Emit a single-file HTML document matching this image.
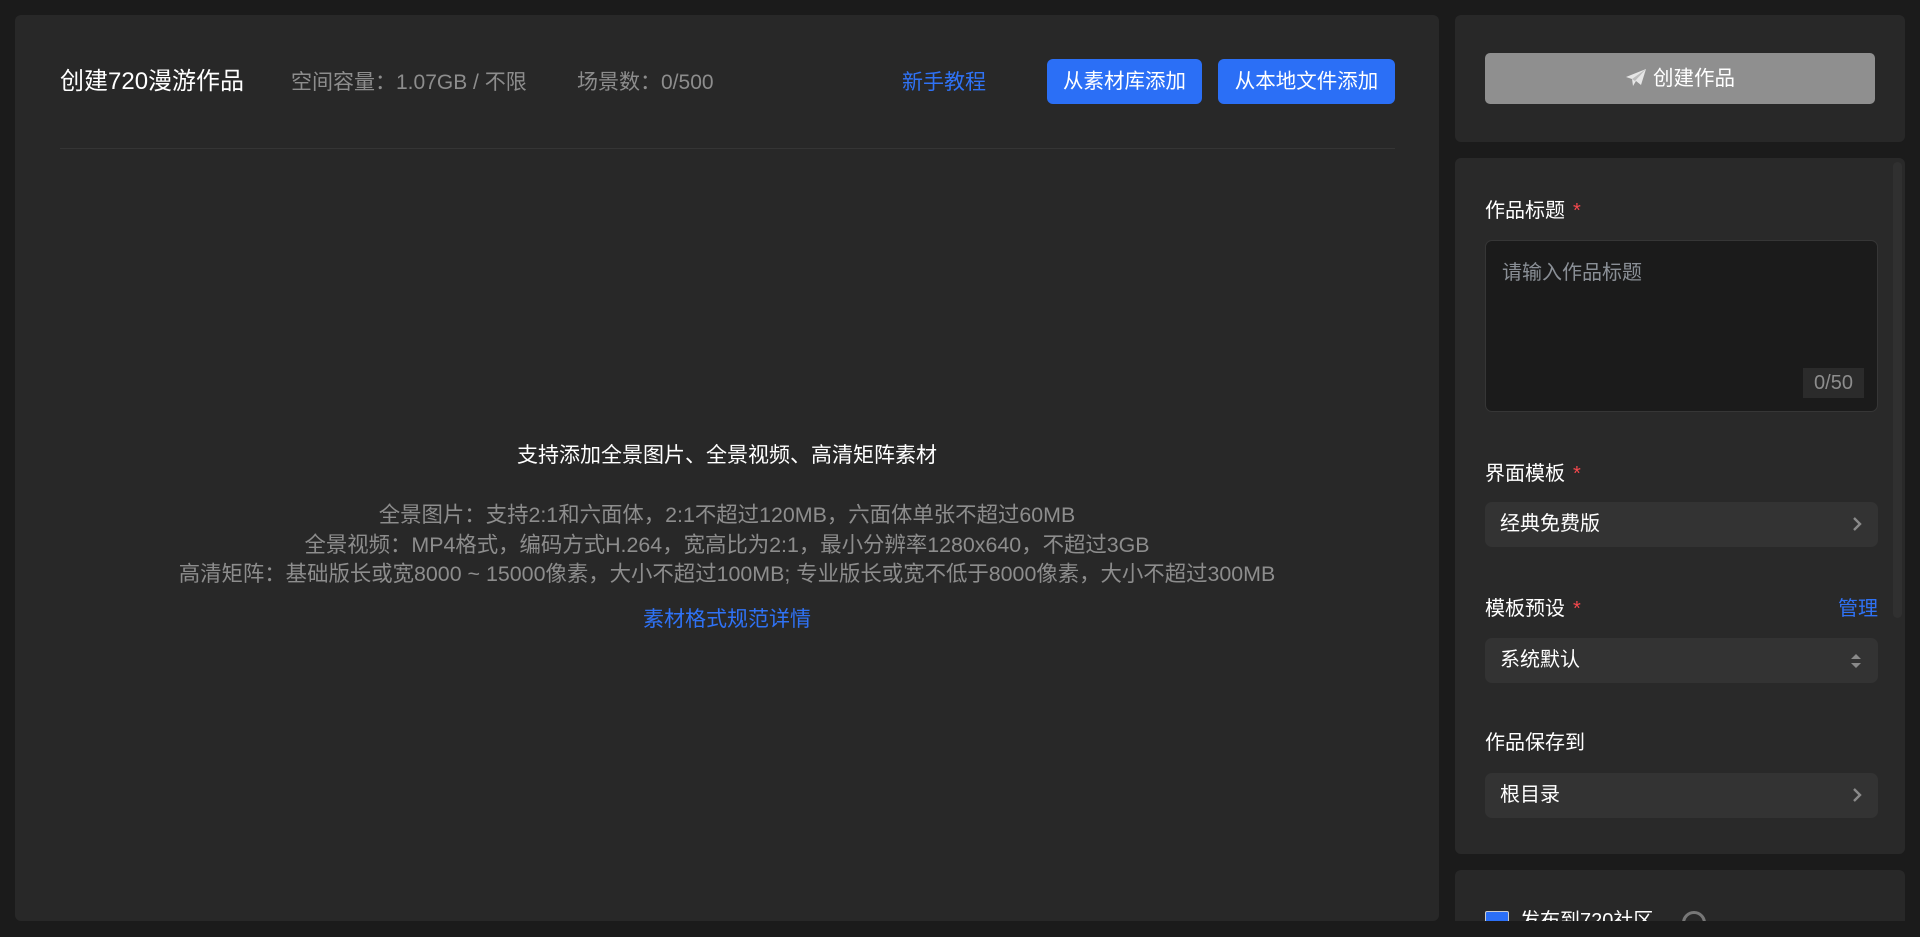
<!DOCTYPE html>
<html><head><meta charset="utf-8"><style>
*{box-sizing:border-box;margin:0;padding:0}
body{width:1920px;height:937px;background:#1b1b1b;font-family:"Liberation Sans","Noto Sans CJK SC",sans-serif;color:#fff;position:relative;overflow:hidden;font-size:20px}
.abs{position:absolute;white-space:nowrap}
.main{position:absolute;left:15px;top:15px;width:1424px;height:906px;background:#282828;border-radius:6px}
.btn{position:absolute;top:59px;height:45px;background:#2b6ff6;border-radius:6px;color:#fff;font-size:20.5px;line-height:45px;text-align:center}
.gray{color:#8d8d8d}
.blue{color:#2f72f5}
.lbl{position:absolute;left:1485px;font-size:20px;line-height:24px;color:#fff}
.lbl i{color:#f5484d;font-style:normal;margin-left:8px}
.sel{position:absolute;left:1485px;width:393px;height:45px;background:#333;border-radius:7px;padding-left:15px;line-height:45px;font-size:20px}
.chev{position:absolute;right:16px;top:14px;width:10px;height:16px}
</style></head><body>
<div class="main"></div>
<div class="abs" style="left:60px;top:67px;font-size:24px;line-height:30px">创建720漫游作品</div>
<div class="abs gray" style="left:291px;top:69px;font-size:21px;line-height:28px">空间容量：1.07GB / 不限</div>
<div class="abs gray" style="left:577px;top:69px;font-size:21px;line-height:28px">场景数：0/500</div>
<div class="abs blue" style="left:902px;top:69px;font-size:21px;line-height:28px">新手教程</div>
<div class="btn" style="left:1047px;width:155px">从素材库添加</div>
<div class="btn" style="left:1218px;width:177px">从本地文件添加</div>
<div class="abs" style="left:60px;top:148px;width:1335px;height:1px;background:#353535"></div>
<div class="abs" style="left:15px;width:1424px;top:442px;text-align:center;font-size:21px;line-height:28px">支持添加全景图片、全景视频、高清矩阵素材</div>
<div class="abs gray" style="left:15px;width:1424px;top:501px;text-align:center;font-size:21.4px;line-height:29.5px">全景图片：支持2:1和六面体，2:1不超过120MB，六面体单张不超过60MB<br>全景视频：MP4格式，编码方式H.264，宽高比为2:1，最小分辨率1280x640，不超过3GB<br>高清矩阵：基础版长或宽8000 ~ 15000像素，大小不超过100MB; 专业版长或宽不低于8000像素，大小不超过300MB</div>
<div class="abs blue" style="left:15px;width:1424px;top:606px;text-align:center;font-size:21px;line-height:28px">素材格式规范详情</div>

<div class="abs" style="left:1455px;top:15px;width:450px;height:127px;background:#282828;border-radius:6px"></div>
<div class="abs" style="left:1485px;top:53px;width:390px;height:51px;background:#8f8f8f;border-radius:5px;text-align:center;line-height:51px;font-size:20.5px">
<svg width="22" height="20" viewBox="0 0 22 20" style="vertical-align:-3px;margin-right:6px"><path d="M21 1L1 9l6 2 1 7 3-5 5 4z" fill="#e6e6e6"/><path d="M7 11L21 1 10 13z" fill="#bdbdbd"/></svg>创建作品</div>

<div class="abs" style="left:1455px;top:158px;width:450px;height:696px;background:#292929;border-radius:6px"></div>
<div class="abs" style="left:1893px;top:162px;width:9px;height:456px;background:#303030;border-radius:5px"></div>
<div class="lbl" style="top:199px">作品标题<i>*</i></div>
<div class="abs" style="left:1485px;top:240px;width:393px;height:172px;background:#1b1b1b;border:1px solid #363636;border-radius:7px"></div>
<div class="abs" style="left:1502px;top:260px;font-size:20px;line-height:26px;color:#8a8f96">请输入作品标题</div>
<div class="abs" style="left:1803px;top:368px;width:61px;height:30px;background:#2b2b2b;color:#8d8d8d;font-size:20px;line-height:30px;text-align:center">0/50</div>
<div class="lbl" style="top:462px">界面模板<i>*</i></div>
<div class="sel" style="top:502px">经典免费版<svg class="chev" viewBox="0 0 10 16"><path d="M2 2l6 6-6 6" stroke="#8a8a8a" stroke-width="2.4" fill="none"/></svg></div>
<div class="lbl" style="top:597px">模板预设<i>*</i></div>
<div class="abs blue" style="left:1838px;top:596px;font-size:20px;line-height:26px">管理</div>
<div class="sel" style="top:638px">系统默认<svg class="chev" viewBox="0 0 10 16" style="top:15px;width:12px;height:16px"><path d="M5 1L10 6H0z M5 15L10 10H0z" fill="#8a8a8a"/></svg></div>
<div class="lbl" style="top:731px">作品保存到</div>
<div class="sel" style="top:773px">根目录<svg class="chev" viewBox="0 0 10 16"><path d="M2 2l6 6-6 6" stroke="#8a8a8a" stroke-width="2.4" fill="none"/></svg></div>

<div class="abs" style="left:1455px;top:870px;width:450px;height:51px;background:#282828;border-radius:6px 6px 0 0;overflow:hidden">
<div style="position:absolute;left:30px;top:41px;width:24px;height:24px;background:#2b6ff6;border:1px solid #ccc;border-radius:2px"></div>
<div style="position:absolute;left:65px;top:38px;font-size:20px;line-height:26px;white-space:nowrap">发布到720社区</div>
<div style="position:absolute;left:227px;top:41px;width:24px;height:24px;border:3px solid #777;border-radius:50%"></div>
</div>
</body></html>
